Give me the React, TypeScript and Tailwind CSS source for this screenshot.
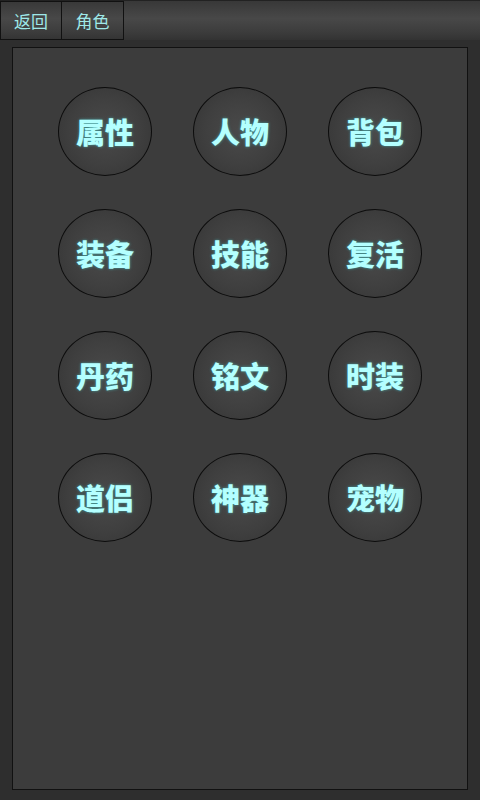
const items = ['属性', '人物', '背包', '装备', '技能', '复活', '丹药', '铭文', '时装', '道侣', '神器', '宠物'];

function RoundButton({ label }: { label: string }) {
  return (
    <div className="w-[94px] h-[89px] rounded-[50%] border border-[#0c0c0c] bg-[radial-gradient(circle,#4a4a4a_0%,#3f3f3f_55%,#333333_100%)] flex items-center justify-center">
      <span className="text-[29px] font-black text-[#b4ffff] [text-shadow:0_0_3px_rgba(70,200,200,0.7)] leading-none">
        {label}
      </span>
    </div>
  );
}

export default function App() {
  return (
    <div className="h-[800px] w-[480px] bg-[#2e2e2e] flex flex-col font-['Noto_Sans_CJK_SC','Noto_Sans',sans-serif] overflow-hidden">
      {/* top bar */}
      <div className="h-10 flex border-t border-[#222] bg-[linear-gradient(#383838_0%,#484848_45%,#3c3c3c_80%,#333_100%)]">
        <button className="w-[62px] h-[39px] border border-[#111] text-[17px] text-[#9ee8e8] flex items-center justify-center">
          返回
        </button>
        <button className="w-[62px] h-[39px] border border-l-0 border-[#111] text-[17px] text-[#9ee8e8] flex items-center justify-center">
          角色
        </button>
      </div>

      {/* main panel */}
      <div className="mx-3 mt-[7px] h-[743px] border border-[#111] bg-[#3c3c3c]">
        <div className="grid grid-cols-[repeat(3,94px)] gap-x-[41px] gap-y-[33px] pl-[45px] pt-[39px]">
          {items.map((it) => (
            <RoundButton key={it} label={it} />
          ))}
        </div>
      </div>
    </div>
  );
}
